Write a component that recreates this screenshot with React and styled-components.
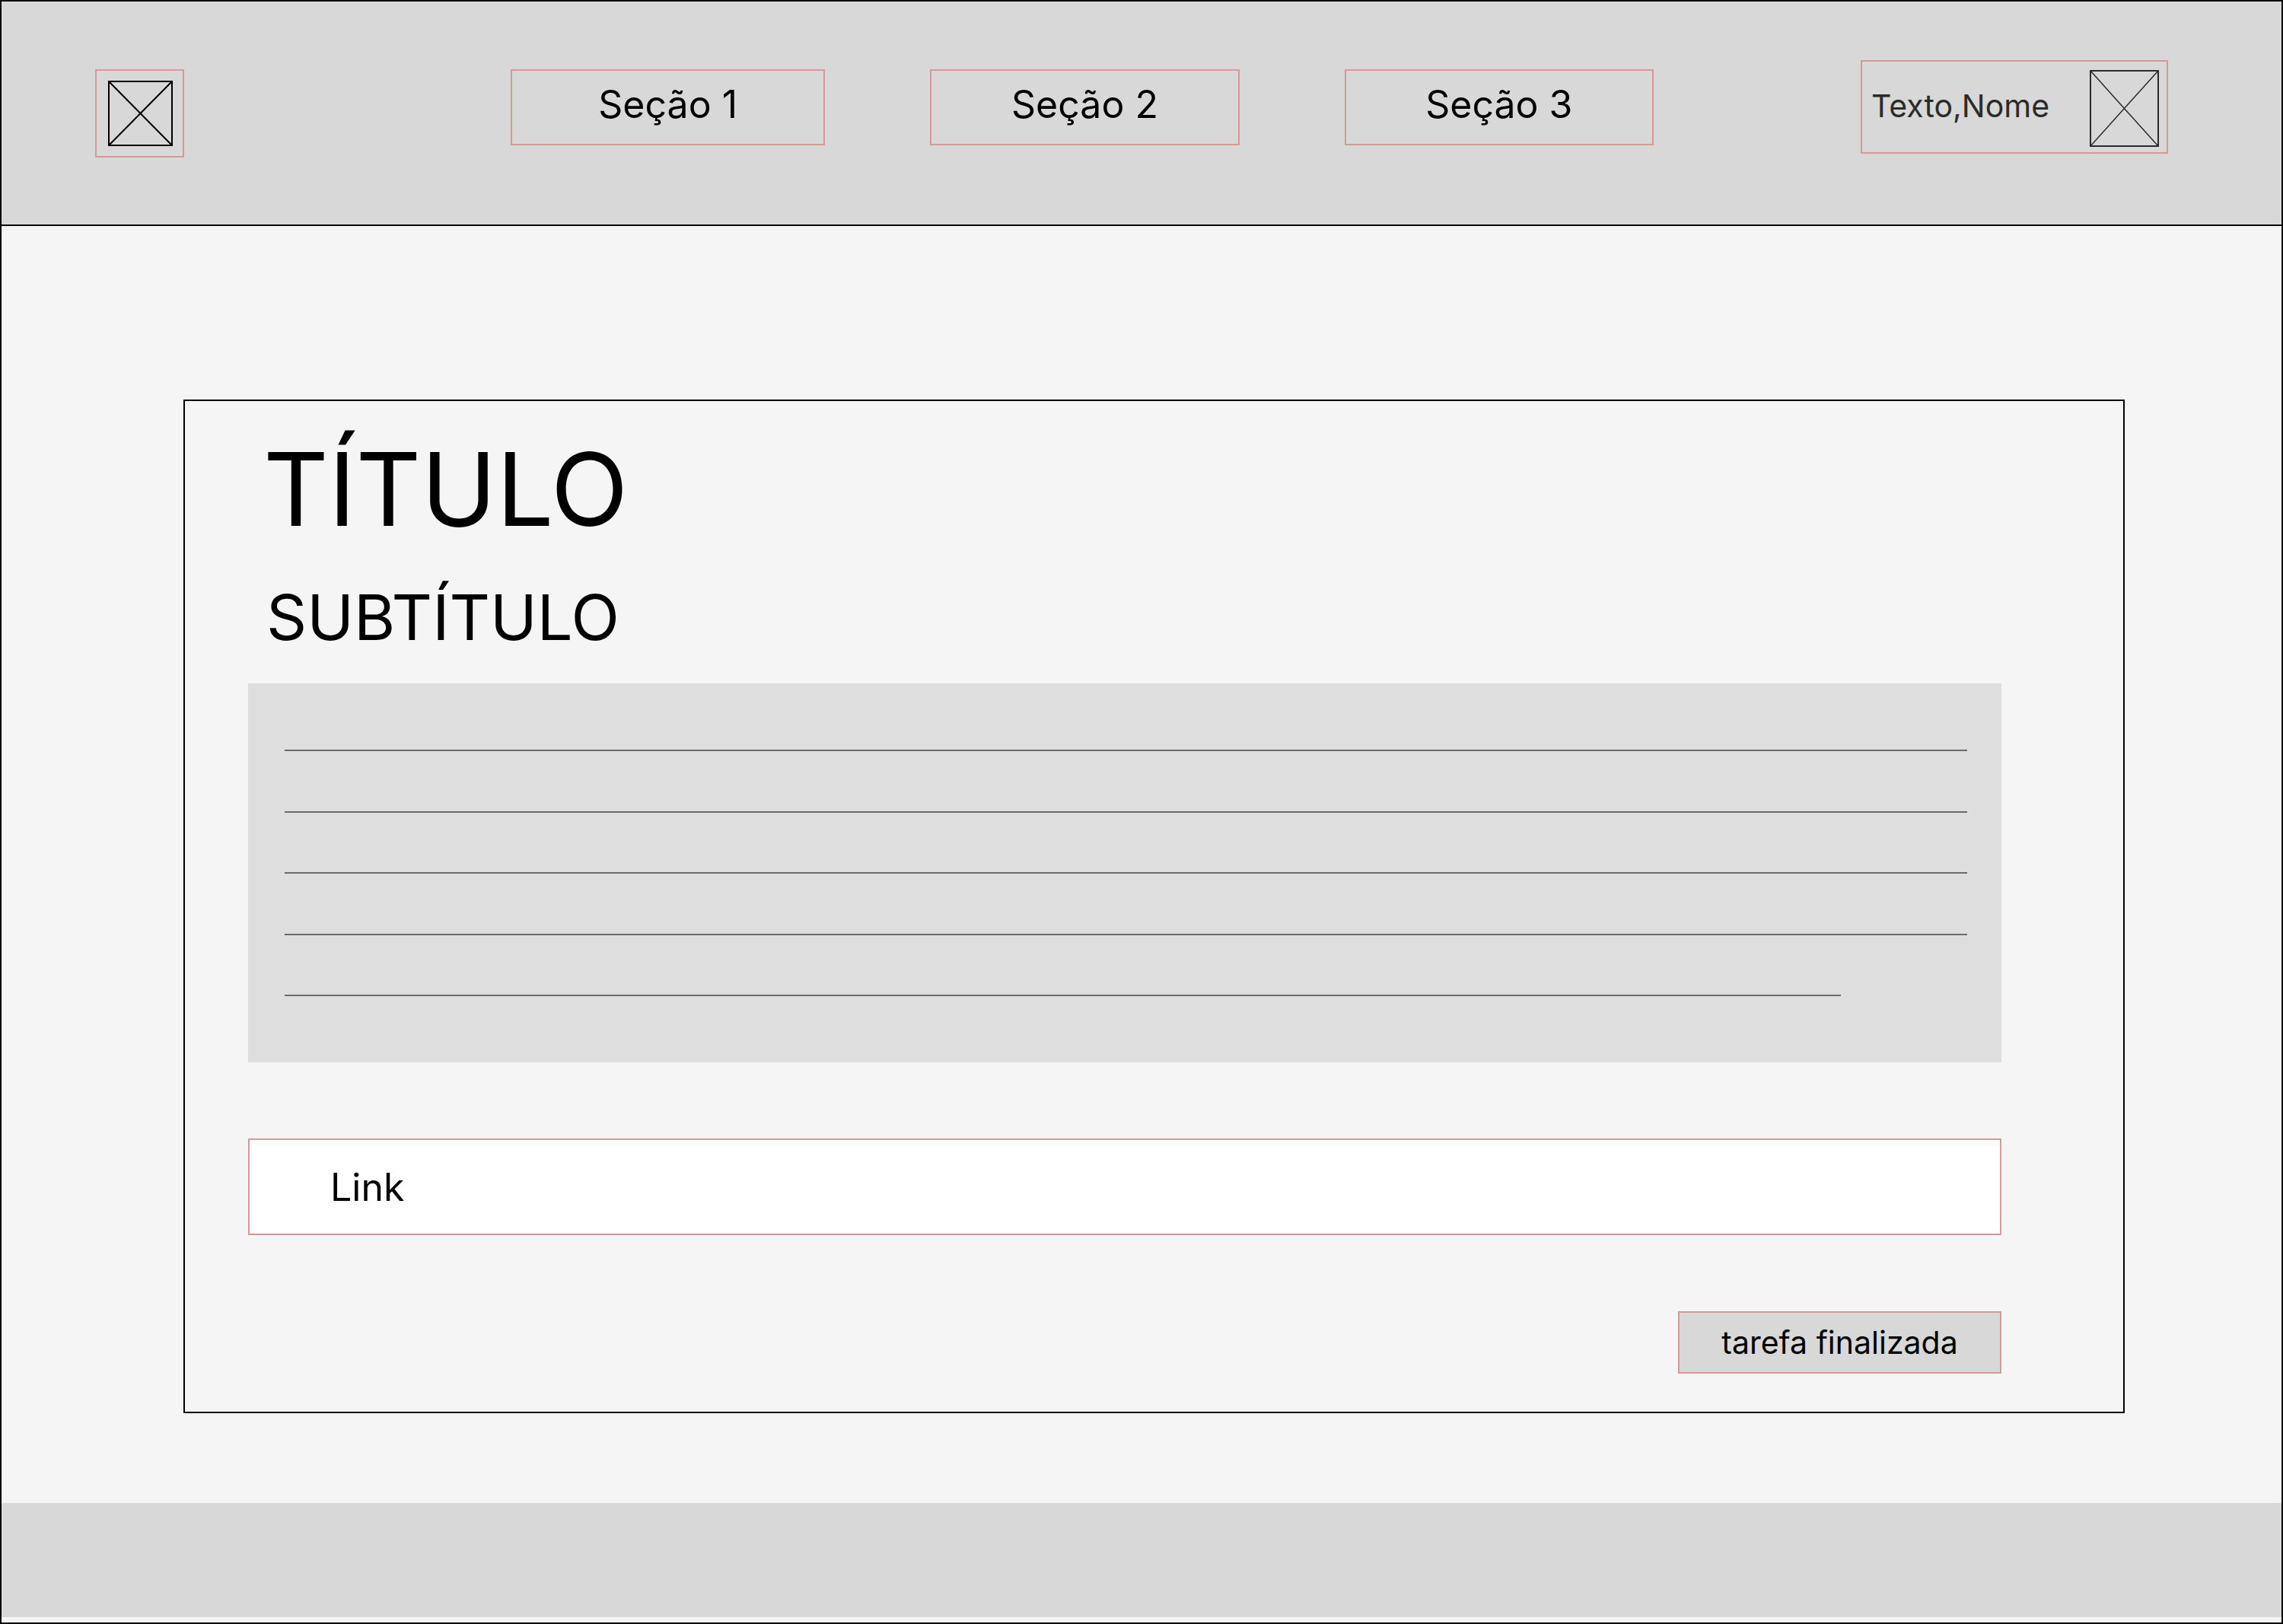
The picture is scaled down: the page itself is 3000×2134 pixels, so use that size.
import React from "react";
import styled, { createGlobalStyle } from "styled-components";

const GlobalStyle = createGlobalStyle`
  *, *::before, *::after { box-sizing: border-box; }
  body {
    margin: 0;
    background: #f5f5f5;
    color: #000;
    font-family: Inter, "Liberation Sans", sans-serif;
  }
`;

const outline = "2px solid #d49999";

const Page = styled.div`
  display: flex;
  flex-direction: column;
  min-height: 100vh;
  padding-bottom: 7px;
  border: 2px solid #000;
  background: #f5f5f5;
`;

const Header = styled.header`
  display: grid;
  grid-template-columns: 117px 429fr 1502fr 272fr 404px;
  align-items: start;
  padding: 77px 149px 88px 123px;
  border-bottom: 2px solid #000;
  background: #d8d8d8;
`;

const LogoLink = styled.a`
  display: block;
  margin-top: 12px;
  padding: 13px 13px 13px 15px;
  border: ${outline};
  color: #000;
`;

const Nav = styled.nav`
  display: grid;
  grid-column: 3;
  grid-template-columns: 413fr 406fr 406fr;
  gap: 138px;
  margin-top: 12px;
`;

const NavLink = styled.a`
  padding: 14px 0 22px;
  border: ${outline};
  color: #000;
  font-size: 50px;
  line-height: 60px;
  text-align: center;
  text-decoration: none;
  white-space: nowrap;
`;

const UserButton = styled.button`
  display: flex;
  grid-column: 5;
  align-items: center;
  justify-content: space-between;
  padding: 11px 10px 7px 12px;
  border: ${outline};
  background: none;
  color: #2b2b2b;
  font-family: inherit;
  font-size: 41px;
  line-height: 50px;
`;

const UserName = styled.span`
  padding-bottom: 7px;
`;

const Picture = styled.svg`
  display: block;
  width: ${({ $width }) => $width}px;
  height: ${({ $height }) => $height}px;
  fill: none;
  stroke: currentColor;
`;

const Card = styled.main`
  display: flex;
  flex: 1;
  flex-direction: column;
  margin: 228px 206px 118px 239px;
  padding: 36px 160px 50px 83px;
  border: 2px solid #000;
`;

const Title = styled.h1`
  margin: 0;
  padding-left: 20px;
  font-size: 133px;
  font-weight: 400;
  line-height: 160px;
`;

const Subtitle = styled.h2`
  margin: 38px 0 37px;
  padding-left: 24px;
  font-size: 83px;
  font-weight: 400;
  line-height: 100px;
`;

const TextBlock = styled.div`
  display: flex;
  flex-direction: column;
  justify-content: space-between;
  min-height: 498px;
  padding: 87px 45px 87px 48px;
  background: #dedede;
`;

const TextLine = styled.div`
  width: ${({ $width }) => $width};
  height: 2px;
  background: #6b6b6b;
`;

const TaskLink = styled.a`
  margin: 100px 0;
  padding: 32px 106px 31px;
  border: ${outline};
  background: #fff;
  color: #000;
  font-size: 50px;
  line-height: 60px;
  text-decoration: none;
`;

const DoneButton = styled.button`
  align-self: flex-end;
  min-width: 425px;
  padding: 14px 24px;
  border: ${outline};
  background: #d8d8d8;
  color: #000;
  font-family: inherit;
  font-size: 41px;
  line-height: 50px;
`;

const Footer = styled.footer`
  padding: 75px;
  background: #d8d8d8;
`;

const sections = ["Seção 1", "Seção 2", "Seção 3"];
const lines = ["100%", "100%", "100%", "100%", "92.5%"];

function CrossedBox({ width, height, crossWidth }) {
  return (
    <Picture
      $width={width}
      $height={height}
      viewBox={`0 0 ${width} ${height}`}
      aria-hidden="true"
    >
      <rect x="1" y="1" width={width - 2} height={height - 2} strokeWidth="2" />
      <path
        d={`M1 1L${width - 1} ${height - 1}M${width - 1} 1L1 ${height - 1}`}
        strokeWidth={crossWidth}
      />
    </Picture>
  );
}

export default function App() {
  return (
    <>
      <GlobalStyle />
      <Page>
        <Header>
          <LogoLink href="#" aria-label="Logo">
            <CrossedBox width={85} height={86} crossWidth={2} />
          </LogoLink>
          <Nav>
            {sections.map((name) => (
              <NavLink key={name} href="#">
                {name}
              </NavLink>
            ))}
          </Nav>
          <UserButton type="button">
            <UserName>Texto,Nome</UserName>
            <CrossedBox width={91} height={101} crossWidth={1.5} />
          </UserButton>
        </Header>
        <Card>
          <Title>TÍTULO</Title>
          <Subtitle>SUBTÍTULO</Subtitle>
          <TextBlock>
            {lines.map((width, index) => (
              <TextLine key={index} $width={width} />
            ))}
          </TextBlock>
          <TaskLink href="#">Link</TaskLink>
          <DoneButton type="button">tarefa finalizada</DoneButton>
        </Card>
        <Footer />
      </Page>
    </>
  );
}
